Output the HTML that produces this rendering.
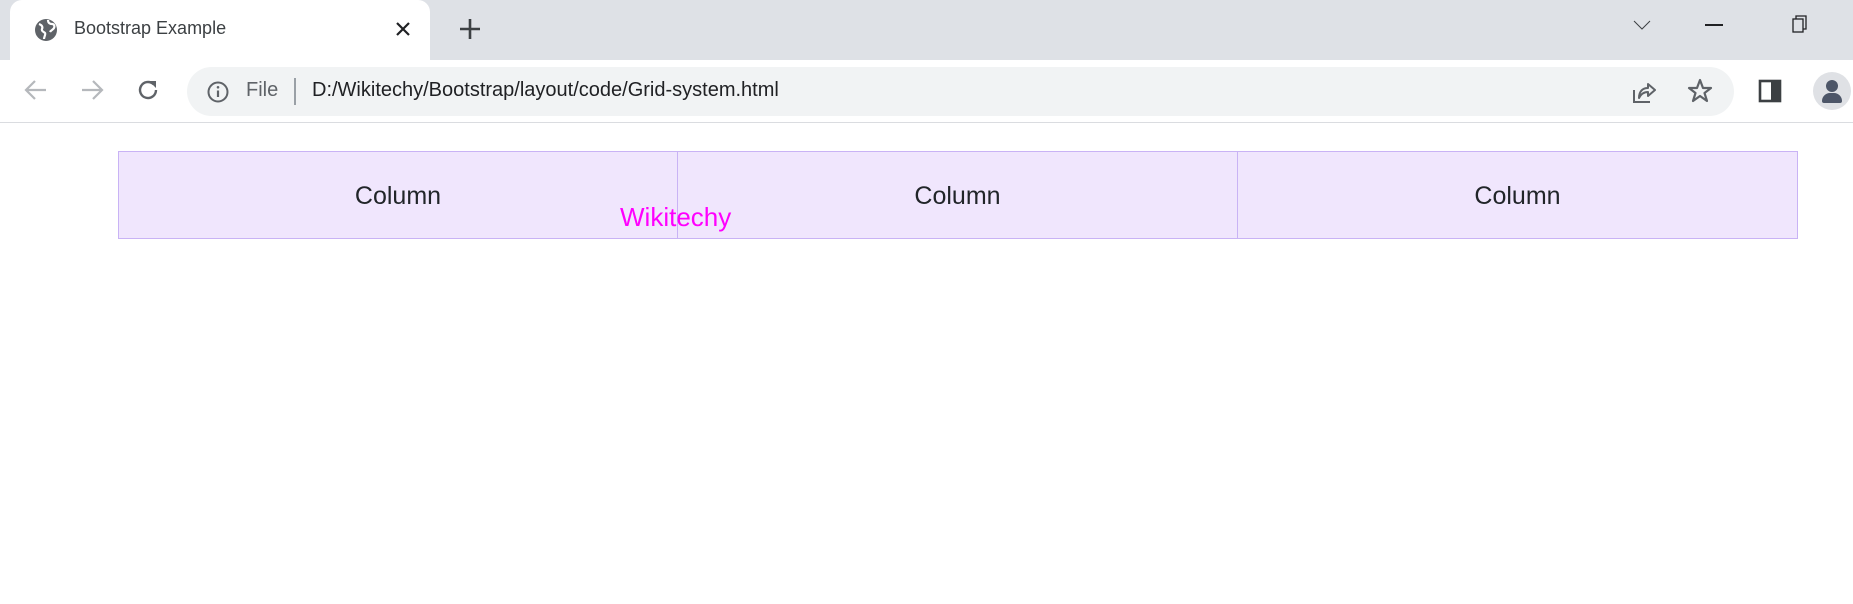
<!DOCTYPE html>
<html><head><meta charset="utf-8"><style>
*{margin:0;padding:0;box-sizing:border-box}
body{width:1853px;height:604px;background:#fff;font-family:"Liberation Sans",sans-serif;position:relative;overflow:hidden}
.abs{position:absolute}
.strip{left:0;top:0;width:1853px;height:60px;background:#dee1e6}
.tab{left:10px;top:0;width:420px;height:60px;background:#fff;border-radius:12px 12px 0 0}
.bar{left:0;top:60px;width:1853px;height:63px;background:#fff;border-bottom:1px solid #dadce0}
.omni{left:187px;top:67px;width:1547px;height:49px;background:#f1f3f4;border-radius:25px}
.t{color:#202124;white-space:nowrap}
.box{top:151px;height:88px;padding-top:2px;background:#f0e6fd;border:1px solid #c9b3f5;display:flex;align-items:center;justify-content:center;font-size:25px;color:#212529}
</style></head><body>
<div class="abs strip"></div>
<div class="abs tab"></div>
<svg class="abs" style="left:34px;top:18px" width="24" height="24" viewBox="0 0 24 24"><circle cx="12" cy="12" r="11" fill="#5f6368"/><path d="M5 6c3 1 4 3 3 5s2 3 3 4-1 4-1 6M14 2c0 3 2 4 4 4s3 2 2 4-3 2-4 4" stroke="#fff" stroke-width="2.2" fill="none"/></svg>
<div class="abs t" style="left:74px;top:18px;font-size:18px;color:#3c4043">Bootstrap Example</div>
<svg class="abs" style="left:394px;top:20px" width="18" height="18" viewBox="0 0 18 18"><path d="M3 3L15 15M15 3L3 15" stroke="#202124" stroke-width="2.2"/></svg>
<svg class="abs" style="left:458px;top:17px" width="24" height="24" viewBox="0 0 24 24"><path d="M12 2V22M2 12H22" stroke="#3c4043" stroke-width="2.6"/></svg>
<svg class="abs" style="left:1630px;top:17px" width="24" height="16" viewBox="0 0 24 16"><path d="M4 4L12 12L20 4" stroke="#3c4043" stroke-width="1" fill="none"/></svg>
<div class="abs" style="left:1705px;top:24px;width:18px;height:1.5px;background:#202124"></div>
<svg class="abs" style="left:1790px;top:14px" width="20" height="20" viewBox="0 0 20 20"><rect x="3" y="5" width="10" height="13" stroke="#202124" stroke-width="1.3" fill="none"/><path d="M6 5V2H16V15H13" stroke="#202124" stroke-width="1.3" fill="none"/></svg>
<div class="abs bar"></div>
<svg class="abs" style="left:22px;top:78px" width="28" height="24" viewBox="0 0 28 24"><path d="M24 12H5M13 3L4 12L13 21" stroke="#b5b8bc" stroke-width="2.2" fill="none"/></svg>
<svg class="abs" style="left:78px;top:78px" width="28" height="24" viewBox="0 0 28 24"><path d="M4 12H23M15 3L24 12L15 21" stroke="#b5b8bc" stroke-width="2.2" fill="none"/></svg>
<svg class="abs" style="left:135px;top:77px" width="26" height="26" viewBox="0 0 26 26"><path d="M21 13A8 8 0 1 1 18.5 7.2" stroke="#5f6368" stroke-width="2.4" fill="none"/><path d="M14 4H21V11Z" fill="#5f6368"/></svg>
<div class="abs omni"></div>
<svg class="abs" style="left:206px;top:80px" width="24" height="24" viewBox="0 0 24 24"><circle cx="12" cy="12" r="9.5" stroke="#5f6368" stroke-width="2" fill="none"/><path d="M12 10.5V17" stroke="#5f6368" stroke-width="2.2"/><circle cx="12" cy="7.3" r="1.3" fill="#5f6368"/></svg>
<div class="abs t" style="left:246px;top:79px;font-size:20px;color:#5f6368">File</div>
<div class="abs" style="left:294px;top:78px;width:1.5px;height:27px;background:#9aa0a6"></div>
<div class="abs t" style="left:312px;top:79px;font-size:20px">D:/Wikitechy/Bootstrap/layout/code/Grid-system.html</div>
<svg class="abs" style="left:1630px;top:78px" width="28" height="28" viewBox="0 0 28 28"><path d="M4 12V24H20" stroke="#5f6368" stroke-width="2" fill="none"/><path d="M9 20C9 13 13 10 18 10V6L25 12L18 18V14C14 14 11 16 9 20Z" stroke="#5f6368" stroke-width="2" fill="none" stroke-linejoin="round"/></svg>
<svg class="abs" style="left:1686px;top:77px" width="28" height="28" viewBox="0 0 28 28"><path d="M14 3L17 11H25L18.5 16L21 24L14 19L7 24L9.5 16L3 11H11Z" stroke="#5f6368" stroke-width="2.2" fill="none" stroke-linejoin="round"/></svg>
<svg class="abs" style="left:1757px;top:78px" width="26" height="26" viewBox="0 0 26 26"><rect x="3" y="3" width="20" height="20" stroke="#3c4043" stroke-width="2.6" fill="none"/><rect x="14" y="3" width="9" height="20" fill="#3c4043"/></svg>
<div class="abs" style="left:1813px;top:72px;width:38px;height:38px;border-radius:50%;background:#dfe1e5;overflow:hidden"><div class="abs" style="left:13px;top:8px;width:12px;height:12px;border-radius:50%;background:#4d5668"></div><div class="abs" style="left:9px;top:21px;width:20px;height:10px;border-radius:8px 8px 2px 2px;background:#4d5668"></div></div>
<div class="abs box" style="left:118px;width:560px">Column</div>
<div class="abs box" style="left:677px;width:561px">Column</div>
<div class="abs box" style="left:1237px;width:561px">Column</div>
<div class="abs" style="left:620px;top:202px;font-size:26px;color:#ff00ff;white-space:nowrap">Wikitechy</div>
</body></html>
